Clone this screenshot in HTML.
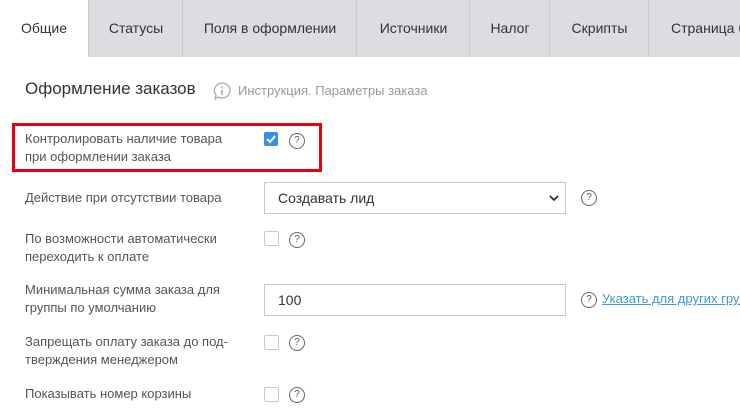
<!DOCTYPE html>
<html><head><meta charset="utf-8"><style>
body{margin:0;width:740px;height:411px;overflow:hidden;background:#fff;font-family:"Liberation Sans",sans-serif;position:relative}
.tabs{position:absolute;left:0;top:0;width:740px;height:57px;background:#dcdde0}
.tab{position:absolute;top:0;height:57px;line-height:57px;font-size:14px;color:#333;text-align:center;border-left:1px solid #c8c9cc}
.a{position:absolute}
.lbl{position:absolute;left:25px;font-size:13px;color:#555;line-height:18px}
.cb{position:absolute;left:264px;width:13px;height:13px;border:1px solid #c9c9c9;border-radius:2px;background:#fff}
.q{position:absolute;width:14px;height:14px;border:1.3px solid #666;border-radius:50%;font-size:10px;line-height:14px;text-align:center;color:#555}
.box{position:absolute;left:264px;width:300px;height:30px;border:1px solid #c8c8c8;font-size:14px;color:#333;line-height:30px;box-sizing:border-box;padding-left:13px;width:302px;height:32px}
</style></head><body>
<div class="tabs">
<div class="tab" style="left:0;width:88px;background:#fff;border:none">Общие</div>
<div class="tab" style="left:88px;width:94px">Статусы</div>
<div class="tab" style="left:182px;width:174px">Поля в оформлении</div>
<div class="tab" style="left:356px;width:113px">Источники</div>
<div class="tab" style="left:469px;width:80px">Налог</div>
<div class="tab" style="left:549px;width:99px">Скрипты</div>
<div class="tab" style="left:648px;width:130px;text-align:left;padding-left:22px">Страница б</div>
</div>
<div class="a" style="left:25px;top:79px;font-size:17px;color:#333">Оформление заказов</div>
<svg class="a" style="left:212px;top:81px" width="20" height="20" viewBox="0 0 20 20"><path d="M10 2a8 7.5 0 1 1-4 14l-3 2 1-4A8 7.5 0 0 1 10 2z" fill="none" stroke="#aaa" stroke-width="1.3"/><circle cx="10" cy="6.5" r="1" fill="#aaa"/><path d="M10 9v5" stroke="#aaa" stroke-width="1.6"/></svg>
<div class="a" style="left:238px;top:83px;font-size:13px;color:#999">Инструкция. Параметры заказа</div>
<div class="a" style="left:12px;top:123px;width:304px;height:43px;border:3px solid #e8000b"></div>
<div class="lbl" style="top:130px">Контролировать наличие товара<br>при оформлении заказа</div>
<div class="a" style="left:264px;top:132px;width:14px;height:14px;background:#3b8ee6;border-radius:2px"><svg width="14" height="14"><path d="M3 7l3 3 5-6" stroke="#fff" stroke-width="2" fill="none"/></svg></div>
<div class="q" style="left:289px;top:133px">?</div>
<div class="lbl" style="top:189px">Действие при отсутствии товара</div>
<div class="box" style="top:182px">Создавать лид<svg style="position:absolute;right:6px;top:11px" width="10" height="8"><path d="M1 2l4 4 4-4" stroke="#222" stroke-width="1.6" fill="none"/></svg></div>
<div class="q" style="left:581px;top:190px">?</div>
<div class="lbl" style="top:230px">По возможности автоматически<br>переходить к оплате</div>
<div class="cb" style="top:231px"></div><div class="q" style="left:289px;top:232px">?</div>
<div class="lbl" style="top:281px">Минимальная сумма заказа для<br>группы по умолчанию</div>
<div class="box" style="top:284px">100</div>
<div class="q" style="left:581px;top:292px">?</div>
<div class="a" style="left:602px;top:291px;font-size:13px;color:#3a9ad9;text-decoration:underline;white-space:nowrap">Указать для других групп</div>
<div class="lbl" style="top:333px">Запрещать оплату заказа до под-<br>тверждения менеджером</div>
<div class="cb" style="top:335px"></div><div class="q" style="left:289px;top:335px">?</div>
<div class="lbl" style="top:385px">Показывать номер корзины</div>
<div class="cb" style="top:387px"></div><div class="q" style="left:289px;top:387px">?</div>
</body></html>
